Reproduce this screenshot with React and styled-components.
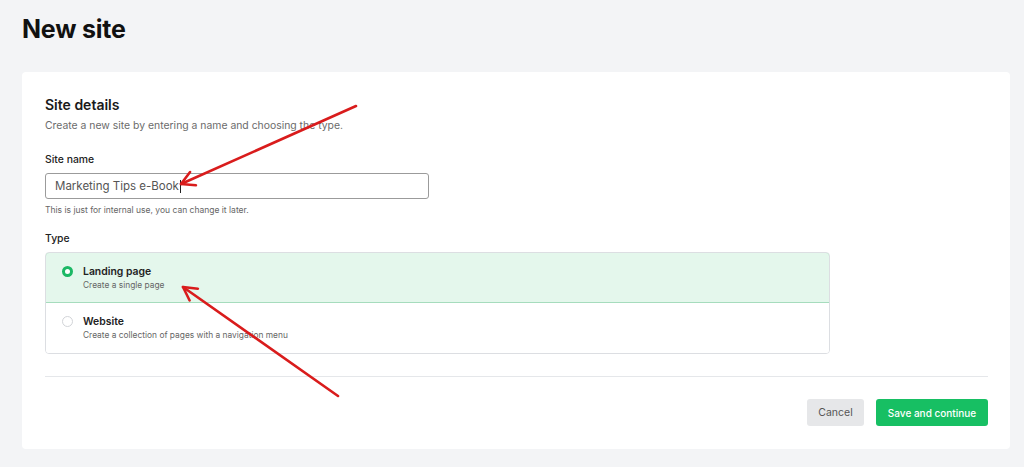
import React from "react";
import styled, { createGlobalStyle } from "styled-components";

const GlobalStyle = createGlobalStyle`
  html, body {
    margin: 0;
    padding: 0;
    background: #f3f4f6;
    font-family: Inter, "Liberation Sans", Arial, sans-serif;
    color: #1a1a1a;
  }
  * { box-sizing: border-box; }
`;

const options = [
  { id: "landing", title: "Landing page", desc: "Create a single page" },
  { id: "website", title: "Website", desc: "Create a collection of pages with a navigation menu" },
];

const arrows = [
  { from: [356, 106], to: [181, 184] },
  { from: [338, 396], to: [183, 287] },
];

function arrowHead([x1, y1], [x2, y2], len = 15, spread = 0.5) {
  const a = Math.atan2(y1 - y2, x1 - x2);
  const p = (d) => [x2 + len * Math.cos(a + d), y2 + len * Math.sin(a + d)];
  const [ax, ay] = p(spread);
  const [bx, by] = p(-spread);
  return `M${ax},${ay} L${x2},${y2} L${bx},${by}`;
}

export default function App() {
  const selected = "landing";

  return (
    <Page>
      <GlobalStyle />
      <Title>New site</Title>
      <Card>
        <SectionTitle>Site details</SectionTitle>
        <Lead>Create a new site by entering a name and choosing the type.</Lead>

        <Label>Site name</Label>
        <Field>
          Marketing Tips e-Book<Caret />
        </Field>
        <Hint>This is just for internal use, you can change it later.</Hint>

        <Label $top={14}>Type</Label>
        <Options>
          {options.map((o) => (
            <Option key={o.id} $active={o.id === selected}>
              <Radio $active={o.id === selected} />
              <div>
                <OptionTitle>{o.title}</OptionTitle>
                <OptionDesc>{o.desc}</OptionDesc>
              </div>
            </Option>
          ))}
        </Options>

        <Divider />

        <Actions>
          <CancelButton>Cancel</CancelButton>
          <SaveButton>Save and continue</SaveButton>
        </Actions>
      </Card>

      <Overlay width="1024" height="467" viewBox="0 0 1024 467">
        {arrows.map((ar, i) => (
          <g key={i} stroke="#d91c1c" strokeWidth="2.6" fill="none" strokeLinecap="round" strokeLinejoin="round">
            <line x1={ar.from[0]} y1={ar.from[1]} x2={ar.to[0]} y2={ar.to[1]} />
            <path d={arrowHead(ar.from, ar.to)} />
          </g>
        ))}
      </Overlay>
    </Page>
  );
}

const Page = styled.div`
  position: relative;
  width: 1024px;
  height: 467px;
  padding: 12px 14px 0 22px;
  overflow: hidden;
`;

const Title = styled.h1`
  margin: 0;
  font-size: 25px;
  line-height: 34px;
  font-weight: 700;
  letter-spacing: -0.2px;
  color: #111;
`;

const Card = styled.div`
  margin-top: 26px;
  width: 988px;
  background: #fff;
  border-radius: 4px;
  padding: 23px 22px 23px 23px;
`;

const SectionTitle = styled.h2`
  margin: 0;
  font-size: 14px;
  line-height: 19px;
  font-weight: 600;
  color: #1a1a1a;
`;

const Lead = styled.p`
  margin: 4px 0 0;
  font-size: 10.4px;
  line-height: 16px;
  color: #6b6b6b;
`;

const Label = styled.div`
  margin-top: ${(p) => p.$top ?? 18}px;
  margin-bottom: 5px;
  font-size: 10.4px;
  line-height: 16px;
  font-weight: 500;
  color: #222;
`;

const Field = styled.div`
  display: flex;
  align-items: center;
  width: 384px;
  height: 26px;
  padding: 0 9px;
  border: 1px solid #9b9b9b;
  border-radius: 3px;
  font-size: 11.5px;
  color: #555;
`;

const Caret = styled.span`
  display: inline-block;
  width: 1px;
  height: 13px;
  background: #222;
  margin-left: 1px;
`;

const Hint = styled.div`
  margin-top: 4px;
  font-size: 8.5px;
  line-height: 14px;
  color: #666;
`;

const Options = styled.div`
  width: 785px;
  border: 1px solid #dcdee2;
  border-radius: 4px;
  overflow: hidden;
`;

const Option = styled.div`
  display: flex;
  align-items: flex-start;
  gap: 10px;
  height: ${(p) => (p.$active ? 51 : 50)}px;
  padding: 11px 16px 0;
  background: ${(p) => (p.$active ? "#e4f7ec" : "#fff")};
  margin: ${(p) => (p.$active ? "-1px -1px 0" : "0")};
  border: ${(p) => (p.$active ? "1px solid #a6dcbd" : "none")};
  border-radius: ${(p) => (p.$active ? "4px 4px 0 0" : "0")};
`;

const Radio = styled.span`
  flex: none;
  margin-top: 2px;
  width: 11px;
  height: 11px;
  border-radius: 50%;
  background: #fff;
  border: ${(p) => (p.$active ? "3px solid #1cb865" : "1px solid #d2d4d8")};
`;

const OptionTitle = styled.div`
  font-size: 10.4px;
  line-height: 15px;
  font-weight: 600;
  color: #222;
`;

const OptionDesc = styled.div`
  font-size: 8.4px;
  line-height: 13px;
  color: #666;
`;

const Divider = styled.hr`
  margin: 22px 0 0;
  border: none;
  border-top: 1px solid #e5e7ea;
`;

const Actions = styled.div`
  display: flex;
  justify-content: flex-end;
  gap: 12px;
  margin-top: 22px;
`;

const Button = styled.button`
  height: 27px;
  border: none;
  border-radius: 3px;
  font-family: inherit;
  font-size: 10.5px;
  cursor: pointer;
`;

const CancelButton = styled(Button)`
  width: 57px;
  background: #e6e7e9;
  color: #555;
`;

const SaveButton = styled(Button)`
  width: 112px;
  background: #17bf63;
  color: #fff;
  font-size: 10px;
  font-weight: 500;
`;

const Overlay = styled.svg`
  position: absolute;
  left: 0;
  top: 0;
  pointer-events: none;
`;
